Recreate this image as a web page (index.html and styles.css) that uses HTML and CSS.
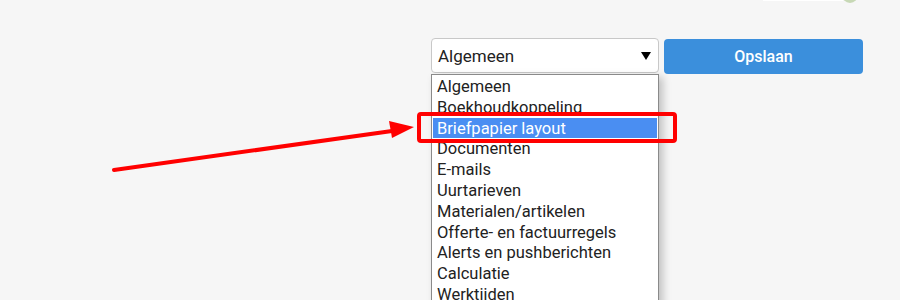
FILE: index.html
```html
<!DOCTYPE html>
<html lang="nl">
<head>
  <meta charset="UTF-8" />
  <title>Instellingen</title>
  <link rel="stylesheet" href="styles.css">
</head>
<body>
  <div class="page">
    <div class="header-edge"></div>
    <div class="avatar"></div>

    <div class="toolbar">
      <div class="select-wrap">
        <div class="select">
          <span>Algemeen</span>
          <svg class="caret" width="10" height="8" viewBox="0 0 10 8"><path d="M0 0H10L5 8Z" fill="#000"/></svg>
        </div>
        <ul class="options">
          <li>Algemeen</li>
          <li>Boekhoudkoppeling</li>
          <li class="active">Briefpapier layout</li>
          <li>Documenten</li>
          <li>E-mails</li>
          <li>Uurtarieven</li>
          <li>Materialen/artikelen</li>
          <li>Offerte- en factuurregels</li>
          <li>Alerts en pushberichten</li>
          <li>Calculatie</li>
          <li>Werktijden</li>
        </ul>
      </div>
      <button class="btn-save">Opslaan</button>
    </div>

    <!-- annotation -->
    <svg class="markup" width="900" height="300" viewBox="0 0 900 300">
      <rect x="419" y="114" width="256" height="27" rx="2" fill="none" stroke="#f00" stroke-width="4"/>
      <line x1="114" y1="170" x2="392" y2="131" stroke="#f00" stroke-width="4" stroke-linecap="round"/>
      <path d="M414 127 L389 121 L392 138 Z" fill="#f00"/>
    </svg>
  </div>
</body>
</html>
```

FILE: styles.css
```css
* { margin: 0; padding: 0; box-sizing: border-box; }
body {
  font-family: Roboto, 'Liberation Sans', sans-serif;
  font-size: 16px;
  color: #222;
  background: #f6f6f6;
  overflow: hidden;
}

.page {
  position: relative;
  width: 900px;
  height: 300px;
}

/* Bottom of the header bar and avatar peeking in */
.header-edge {
  position: absolute;
  top: 0;
  left: 763px;
  width: 80px;
  height: 1px;
  background: #fff;
}
.avatar {
  position: absolute;
  top: -14px;
  right: 42px;
  width: 16px;
  height: 17px;
  border-radius: 50%;
  background: #a9c58a;
  opacity: 0.6;
}

/* Toolbar */
.toolbar {
  display: flex;
  justify-content: flex-end;
  align-items: flex-start;
  gap: 5px;
  padding: 38px 37px 0 0;
}
.select-wrap { position: relative; width: 228px; }
.select {
  display: flex;
  align-items: center;
  justify-content: space-between;
  height: 35px;
  padding: 0 6px;
  background: #fff;
  border: 1px solid #c8c8c8;
  border-radius: 4px;
  font-size: 17px;
}
.caret { margin-right: 1px; margin-top: 1px; }

/* Opened option list */
.options {
  position: absolute;
  top: 36px;
  left: 0;
  width: 228px;
  list-style: none;
  background: #fff;
  border: 1px solid #8a8a8a;
  padding: 1px 1px 0;
  box-shadow: 4px 3px 8px rgba(0,0,0,0.22);
  font-size: 16.5px;
}
.options li {
  height: 20.8px;
  line-height: 22px;
  padding-left: 4px;
  white-space: nowrap;
}
.options li.active { background: #4a8ef2; color: #fff; }

.btn-save {
  width: 199px;
  height: 35px;
  border: 0;
  border-radius: 4px;
  background: #3b8fdc;
  color: #fff;
  font-family: inherit;
  font-size: 16px;
  font-weight: 500;
  margin-top: 1px;
}

.markup {
  position: absolute;
  top: 0;
  left: 0;
  pointer-events: none;
}
```
